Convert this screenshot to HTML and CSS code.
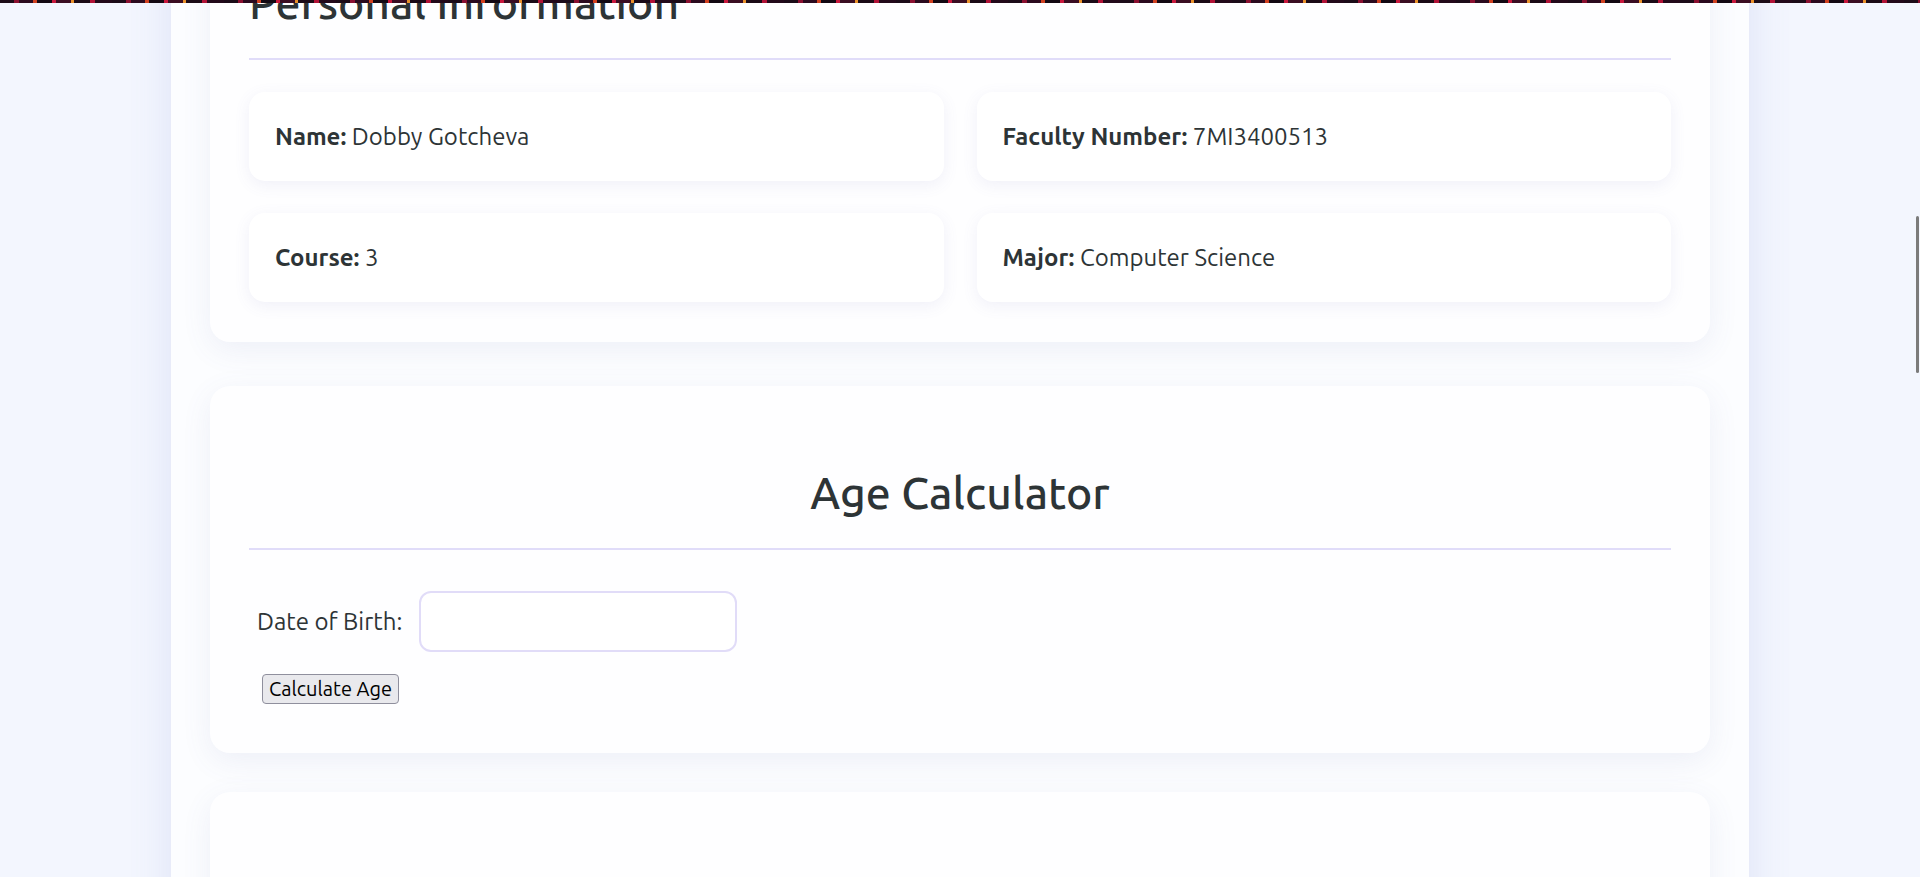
FILE: index.html
```html
<!DOCTYPE html>
<html lang="en">
<head>
<meta charset="utf-8">
<title>Student Profile</title>
<link rel="stylesheet" href="styles.css">
</head>
<body>
<div class="header-strip"></div>
<main class="container">
  <section class="card-section section-info">
    <h2 class="section-title">Personal Information</h2>
    <div class="info-grid">
      <div class="info-item"><strong>Name:</strong> Dobby Gotcheva</div>
      <div class="info-item"><strong>Faculty Number:</strong> 7MI3400513</div>
      <div class="info-item"><strong>Course:</strong> 3</div>
      <div class="info-item"><strong>Major:</strong> Computer Science</div>
    </div>
  </section>
  <section class="card-section section-age">
    <h2 class="section-title centered">Age Calculator</h2>
    <div class="form-row">
      <label class="form-label" for="dob">Date of Birth:</label>
      <input class="form-input" type="text" id="dob">
    </div>
    <button class="calc-btn" type="button">Calculate Age</button>
  </section>
  <section class="card-section section-next"></section>
</main>
<div class="scroll-thumb"></div>
</body>
</html>
```
FILE: styles.css
```css
html, body {
  margin: 0;
  padding: 0;
}

body {
  height: 877px;
  overflow: hidden;
  background: #f3f6fe;
  font-family: "Ubuntu", "Open Sans", sans-serif;
  color: #2d3436;
}

.header-strip {
  position: fixed;
  top: 0;
  left: 0;
  right: 0;
  height: 3px;
  z-index: 10;
  background: repeating-linear-gradient(90deg,
    #1b0b18 0 14px, #8a1030 14px 19px, #2a0a1e 19px 33px,
    #d04020 33px 37px, #120812 37px 52px, #c8183c 52px 56px,
    #3a0d22 56px 71px, #e8902a 71px 74px, #1a0a16 74px 90px,
    #b01236 90px 95px, #22091a 95px 112px);
}

.container {
  width: 1578px;
  box-sizing: border-box;
  margin: -104px auto 0;
  padding: 0 39px;
  background: #fcfdff;
  box-shadow: 0 0 40px rgba(110, 125, 200, 0.16);
  min-height: 1200px;
}

.card-section {
  background: #fefeff;
  border-radius: 20px;
  padding: 40px 39px;
  box-shadow: 0 8px 30px rgba(90, 95, 165, 0.09);
}

.section-info {
  margin-bottom: 44px;
}

.section-age {
  margin-bottom: 39px;
}

.section-next {
  height: 300px;
}

.section-title {
  margin: 42px 0 32px;
  padding-bottom: 30px;
  border-bottom: 2px solid #e0dcf9;
  font-size: 44.5px;
  line-height: 50px;
  font-weight: 500;
  color: #2d3436;
}

.section-title.centered {
  text-align: center;
  margin-bottom: 41px;
}

.info-grid {
  display: grid;
  grid-template-columns: 1fr 1fr;
  gap: 32px 33px;
}

.info-item {
  background: #ffffff;
  border-radius: 16px;
  padding: 31px 26px;
  font-size: 24px;
  line-height: 27px;
  box-shadow: 0 4px 16px rgba(100, 100, 175, 0.09);
}

.info-item strong {
  font-weight: 700;
}

.form-row {
  display: flex;
  align-items: center;
  margin: 0 0 22px 8px;
}

.form-label {
  font-size: 24px;
  line-height: 27px;
  margin-right: 17px;
}

.form-input {
  box-sizing: border-box;
  width: 318px;
  height: 61px;
  border: 2px solid #e1dcf8;
  border-radius: 12px;
  background: #ffffff;
  font-family: inherit;
  font-size: 24px;
  outline: none;
}

.calc-btn {
  display: block;
  box-sizing: border-box;
  height: 30px;
  margin: 0 0 9px 13px;
  padding: 0 6px;
  font-family: "Ubuntu", "Open Sans", sans-serif;
  font-size: 20px;
  line-height: 26px;
  color: #000000;
  background: #e9e9ed;
  border: 1px solid #8f8f9d;
  border-radius: 4px;
}

.scroll-thumb {
  position: fixed;
  top: 216px;
  right: 1px;
  width: 3px;
  height: 157px;
  border-radius: 2px;
  background: #7b7b7b;
}
```
